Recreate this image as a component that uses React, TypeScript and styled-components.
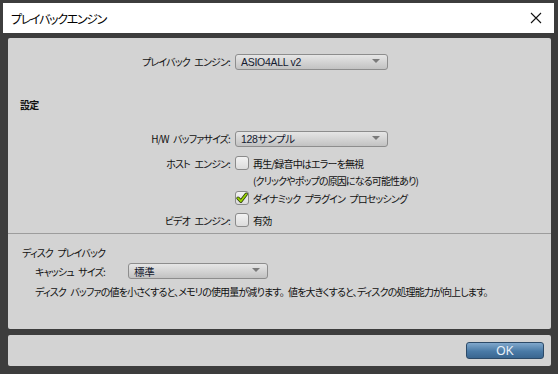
import * as React from 'react'
import styled, { createGlobalStyle } from 'styled-components'

const JP = `"Noto Sans CJK JP", "Liberation Sans", sans-serif`

const Global = createGlobalStyle`
    html, body {
        margin: 0;
        padding: 0;
        background: #3d3d3d;
    }
    body {
        font-family: ${JP};
        font-size: 10px;
        letter-spacing: -0.85px;
        word-spacing: 3px;
        color: #111;
        font-feature-settings: "palt";
    }
`

const CheckMark = () => (
    <svg width="14" height="14" viewBox="0 0 14 14">
        <path d="M3 7.2 L5.8 10.2 L11.2 3.2" fill="none" stroke="#2b3a10" strokeWidth="3.4" strokeLinecap="round" strokeLinejoin="round" />
        <path d="M3 7.2 L5.8 10.2 L11.2 3.2" fill="none" stroke="#9ad400" strokeWidth="1.8" strokeLinecap="round" strokeLinejoin="round" />
    </svg>
)

const App = () => (
    <Window>
        <Global />
        <TitleBar>
            <Title>プレイバックエンジン</Title>
            <Close>
                <svg width="12" height="12" viewBox="0 0 12 12">
                    <path d="M1 1 L11 11 M11 1 L1 11" stroke="#111" strokeWidth="1.1" />
                </svg>
            </Close>
        </TitleBar>
        <Body>
            <MainPanel>
                <FieldRow $top={15}>
                    <Label>プレイバック エンジン:</Label>
                    <Select $width={153}>ASIO4ALL v2</Select>
                </FieldRow>
                <Heading $top={27} $left={12}>設定</Heading>
                <FieldRow $top={17}>
                    <Label>H/W バッファサイズ:</Label>
                    <Select $width={153}>128サンプル</Select>
                </FieldRow>
                <FieldRow $top={7}>
                    <Label>ホスト エンジン:</Label>
                    <Check>
                        <Box />
                        <span>再生/録音中はエラーを無視</span>
                    </Check>
                </FieldRow>
                <FieldRow $top={0}>
                    <Label />
                    <Note>(クリックやポップの原因になる可能性あり)</Note>
                </FieldRow>
                <FieldRow $top={0}>
                    <Label />
                    <Check>
                        <Box><CheckMark /></Box>
                        <span>ダイナミック プラグイン プロセッシング</span>
                    </Check>
                </FieldRow>
                <FieldRow $top={4}>
                    <Label>ビデオ エンジン:</Label>
                    <Check>
                        <Box />
                        <span>有効</span>
                    </Check>
                </FieldRow>
                <Divider />
                <Heading $top={11} $left={14} $normal>ディスク プレイバック</Heading>
                <CacheRow>
                    <CacheLabel>キャッシュ サイズ:</CacheLabel>
                    <Select $width={140}>標準</Select>
                </CacheRow>
                <Description>
                    ディスク バッファの値を小さくすると、メモリの使用量が減ります。 値を大きくすると、ディスクの処理能力が向上します。
                </Description>
            </MainPanel>
            <Footer>
                <OkButton>OK</OkButton>
            </Footer>
        </Body>
    </Window>
)

const Window = styled.div`
    width: 558px;
    height: 374px;
    box-sizing: border-box;
    padding: 3px 4px 0 3px;
    display: flex;
    flex-direction: column;
    background: #3d3d3d;
    overflow: hidden;
`

const TitleBar = styled.div`
    height: 30px;
    flex: none;
    background: #fff;
    display: flex;
    align-items: center;
    justify-content: space-between;
    padding: 0 12px 0 8px;
`

const Title = styled.div`
    font-size: 12px;
    letter-spacing: -1.3px;
    color: #000;
`

const Close = styled.div`
    display: flex;
    align-items: center;
`

const Body = styled.div`
    display: flex;
    flex-direction: column;
    gap: 6px;
    padding: 5px 3px 0 5px;
    min-width: 0;
`

const MainPanel = styled.div`
    height: 291px;
    min-width: 0;
    overflow: hidden;
    background: #d3d3d3;
    border-radius: 2px;
    display: flex;
    flex-direction: column;
`

const FieldRow = styled.div<{ $top: number }>`
    display: flex;
    align-items: center;
    gap: 5px;
    min-height: 17px;
    margin-top: ${p => p.$top}px;
`

const Label = styled.div`
    width: 222px;
    flex: none;
    text-align: right;
    white-space: nowrap;
`

const Select = styled.div<{ $width: number }>`
    position: relative;
    width: ${p => p.$width}px;
    height: 16px;
    box-sizing: border-box;
    padding-left: 5px;
    display: flex;
    align-items: center;
    border: 1px solid #8d8d8d;
    border-radius: 3px;
    background: linear-gradient(#e6e6e6, #c2c2c2);
    color: #141a30;
    font-family: "Liberation Sans", ${JP};
    font-size: 10.5px;
    letter-spacing: -0.3px;
    word-spacing: normal;
    &::after {
        content: '';
        position: absolute;
        right: 7px;
        top: 4px;
        border-left: 4px solid transparent;
        border-right: 4px solid transparent;
        border-top: 4px solid #7a7a7a;
    }
`

const Heading = styled.div<{ $top: number; $left: number; $normal?: boolean }>`
    margin-top: ${p => p.$top}px;
    padding-left: ${p => p.$left}px;
    line-height: 16px;
    font-weight: ${p => (p.$normal ? 400 : 700)};
`

const Check = styled.div`
    display: flex;
    align-items: center;
    gap: 4px;
    height: 18px;
`

const Box = styled.div`
    width: 14px;
    height: 14px;
    box-sizing: border-box;
    border: 1px solid #8a8a8a;
    border-radius: 3px;
    background: linear-gradient(#f2f2f2, #dcdcdc);
    display: flex;
    align-items: center;
    justify-content: center;
    & svg {
        margin: -1px;
    }
`

const Note = styled.div`
    height: 17px;
    line-height: 17px;
    padding-left: 18px;
`

const Divider = styled.div`
    height: 1px;
    margin-top: 4px;
    background: #9c9c9c;
`

const CacheRow = styled.div`
    display: flex;
    align-items: center;
    padding-left: 27px;
    margin-top: 2px;
`

const CacheLabel = styled.div`
    width: 93px;
    white-space: nowrap;
`

const Description = styled.div`
    margin-top: 5px;
    padding-left: 27px;
    line-height: 16px;
    white-space: nowrap;
`

const Footer = styled.div`
    height: 31px;
    background: #d3d3d3;
    border-radius: 2px;
    display: flex;
    align-items: center;
    justify-content: flex-end;
    padding-right: 7px;
`

const OkButton = styled.button`
    width: 78px;
    height: 17px;
    padding: 0;
    border: 1px solid #2c4a68;
    border-radius: 3px;
    background: linear-gradient(#80a8cc, #4a7aa6 55%, #3a6690);
    color: #e8f0f8;
    font-family: "Liberation Sans", sans-serif;
    font-size: 12px;
`

export default App
